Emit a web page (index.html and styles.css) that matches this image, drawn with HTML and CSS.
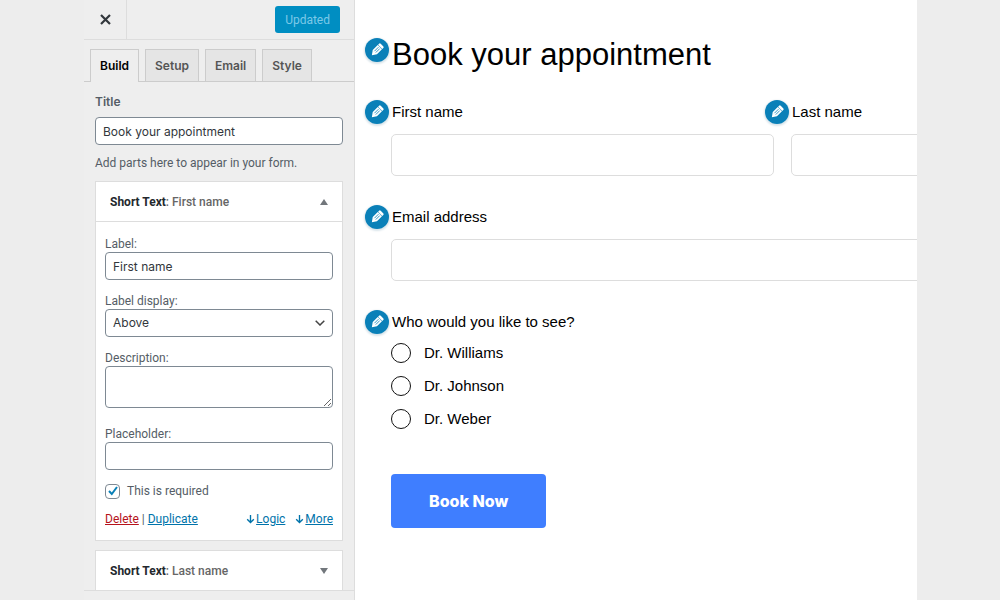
FILE: index.html
```html
<!DOCTYPE html>
<html lang="en">
<head>
<meta charset="utf-8">
<meta name="viewport" content="width=device-width, initial-scale=1">
<title>Book your appointment</title>
<link rel="stylesheet" href="styles.css">
</head>
<body>
<svg class="symbols">
  <symbol id="pencil" viewBox="0 0 16 16">
    <g transform="rotate(45 8 8)">
      <path fill="#fff" d="M4.600 2.800V1.300Q4.600 0 6 0h4q1.400 0 1.400 1.300v1.500zM4.600 3.400h6.800v8.100L8 16.300l-3.400-4.800z"/>
      <path fill="none" stroke="#0a80b8" stroke-width=".9" d="M6.900 4.600v6.400M9.100 4.600v6.400"/>
    </g>
  </symbol>
  <symbol id="down" viewBox="0 0 10 10">
    <path fill="none" stroke="currentColor" stroke-width="1.500" d="M5 .5v8.200M1.300 5.200 5 8.900l3.700-3.700"/>
  </symbol>
</svg>
<div class="app">
  <aside class="sidebar">
    <header class="topbar">
      <button class="close" type="button" aria-label="Close">
        <svg width="11" height="11" viewBox="0 0 11 11"><path stroke="#32373c" stroke-width="2.200" d="m1 1 9 9M10 1l-9 9"/></svg>
      </button>
      <button class="updated" type="button">Updated</button>
    </header>
    <nav class="tabs">
      <button class="tab tab-active" type="button">Build</button>
      <button class="tab" type="button">Setup</button>
      <button class="tab" type="button">Email</button>
      <button class="tab" type="button">Style</button>
    </nav>
    <div class="panel">
      <label class="title-label" for="title">Title</label>
      <input class="control" id="title" type="text" value="Book your appointment">
      <p class="hint">Add parts here to appear in your form.</p>
      <section class="card">
        <h2 class="card-head"><span><strong>Short Text</strong>: First name</span><span class="triangle up"></span></h2>
        <div class="card-body">
          <div class="setting"><label for="label">Label:</label><input class="control" id="label" type="text" value="First name"></div>
          <div class="setting"><label for="display">Label display:</label>
            <div class="select-wrap">
              <select class="control" id="display"><option>Above</option></select>
              <svg class="chevron" width="10" height="6" viewBox="0 0 10 6"><path fill="none" stroke="#444" stroke-width="1.500" d="m.7.7 4.300 4.300L9.300.7"/></svg>
            </div>
          </div>
          <div class="setting"><label for="description">Description:</label><textarea class="control" id="description"></textarea></div>
          <div class="setting"><label for="placeholder">Placeholder:</label><input class="control" id="placeholder" type="text"></div>
          <div class="check-row"><span class="check-wrap"><input class="check" id="required" type="checkbox" checked><svg class="tick" width="10" height="10" viewBox="0 0 10 10"><path fill="none" stroke="#0a80b8" stroke-width="2" d="m1 5 2.800 3L9 1"/></svg></span><label for="required">This is required</label></div>
          <div class="actions">
            <span><a class="delete" href="#">Delete</a> | <a href="#">Duplicate</a></span>
            <span class="more"><a href="#"><svg width="9" height="10"><use href="#down"/></svg>Logic</a><a href="#"><svg width="9" height="10"><use href="#down"/></svg>More</a></span>
          </div>
        </div>
      </section>
      <section class="card">
        <h2 class="card-head"><span><strong>Short Text</strong>: Last name</span><span class="triangle down"></span></h2>
      </section>
    </div>
    <footer class="footbar"></footer>
  </aside>
  <main class="preview">
    <form class="form">
      <div class="heading">
        <button class="edit" type="button" aria-label="Edit heading"><svg width="14" height="14"><use href="#pencil"/></svg></button>
        <h1>Book your appointment</h1>
      </div>
      <div class="pair">
        <div class="field">
          <div class="field-label"><button class="edit" type="button" aria-label="Edit first name"><svg width="14" height="14"><use href="#pencil"/></svg></button><label for="first">First name</label></div>
          <input class="box" id="first" type="text">
        </div>
        <div class="field">
          <div class="field-label"><button class="edit" type="button" aria-label="Edit last name"><svg width="14" height="14"><use href="#pencil"/></svg></button><label for="last">Last name</label></div>
          <input class="box" id="last" type="text">
        </div>
      </div>
      <div class="field">
        <div class="field-label"><button class="edit" type="button" aria-label="Edit email address"><svg width="14" height="14"><use href="#pencil"/></svg></button><label for="email">Email address</label></div>
        <input class="box" id="email" type="email">
      </div>
      <div class="field" role="radiogroup" aria-labelledby="who">
        <div class="field-label choices-label"><button class="edit" type="button" aria-label="Edit doctors"><svg width="14" height="14"><use href="#pencil"/></svg></button><span id="who">Who would you like to see?</span></div>
        <div class="choices">
          <label class="choice"><input type="radio" name="doctor">Dr. Williams</label>
          <label class="choice"><input type="radio" name="doctor">Dr. Johnson</label>
          <label class="choice"><input type="radio" name="doctor">Dr. Weber</label>
        </div>
      </div>
      <button class="submit" type="button">Book Now</button>
    </form>
  </main>
</div>
</body>
</html>
```
FILE: styles.css
```css
* { box-sizing: border-box; }
body {
  margin: 0;
  background: #ededed;
  color: #555d66;
  font: 12px/16px Roboto, "Liberation Sans", sans-serif;
}
button, input, select, textarea { font: inherit; margin: 0; }
.symbols { display: none; }
.app {
  display: flex;
  height: 100vh;
  padding: 0 83px 0 84px;
  overflow: hidden;
}

.sidebar {
  display: flex;
  flex-direction: column;
  flex: none;
  width: 271px;
  background: #eee;
  border-right: 1px solid #ddd;
}
.topbar {
  display: flex;
  flex: none;
  justify-content: space-between;
  align-items: center;
  height: 40px;
  padding-right: 14px;
  border-bottom: 1px solid #ddd;
}
.close {
  display: grid;
  place-items: center;
  align-self: stretch;
  width: 43px;
  padding: 0;
  background: none;
  border: 0;
  border-right: 1px solid #ddd;
}
.updated {
  height: 27px;
  padding: 0 10px;
  background: #008ec2;
  color: #7cc9e8;
  border: 0;
  border-radius: 3px;
}
.tabs {
  display: flex;
  flex: none;
  gap: 6px;
  padding: 9px 6px 0;
  border-bottom: 1px solid #ccc;
}
.tab {
  height: 32px;
  padding: 0 9px;
  background: #e5e5e5;
  color: #555;
  border: 1px solid #ccc;
  border-bottom: 0;
  font-family: Inter, sans-serif;
  font-weight: 600;
}
.tab-active {
  height: 33px;
  margin-bottom: -1px;
  background: #eee;
  color: #000;
}

.panel {
  flex: 1;
  min-height: 0;
  padding: 12px 11px 0;
  overflow: hidden;
}
.title-label {
  display: block;
  margin-bottom: 7px;
  font-family: Inter, sans-serif;
  font-weight: 600;
}
.control {
  display: block;
  width: 100%;
  height: 28px;
  padding: 0 7px;
  background: #fff;
  color: #32373c;
  border: 1px solid #7e8993;
  border-radius: 4px;
  font-family: Inter, sans-serif;
}
.hint { margin: 10px 0; }
.card {
  margin-bottom: 9px;
  background: #fff;
  border: 1px solid #ddd;
}
.card-head {
  display: flex;
  justify-content: space-between;
  align-items: center;
  height: 39px;
  margin: 0;
  padding: 0 14px;
  color: #666;
  font-size: 12px;
  font-weight: 500;
}
.card-head strong { color: #23282d; font-weight: 700; }
.triangle {
  border: 4px solid transparent;
  border-top: 0;
  border-bottom: 6px solid #72777c;
}
.triangle.down { border-bottom: 0; border-top: 6px solid #72777c; }
.card-body { padding: 14px 9px 13px; border-top: 1px solid #ddd; }
.setting { margin-bottom: 13px; }
.setting label { display: block; }
.select-wrap { display: grid; align-items: center; }
.select-wrap > * { grid-area: 1 / 1; }
select.control { appearance: none; }
.chevron { justify-self: end; margin-right: 8px; pointer-events: none; }
textarea.control { height: 42px; margin-bottom: 18px; }
.check-row { display: flex; align-items: center; gap: 7px; margin-bottom: 12px; }
.check-wrap { display: grid; place-items: center; }
.check-wrap > * { grid-area: 1 / 1; }
.check {
  appearance: none;
  width: 15px;
  height: 15px;
  background: #fff;
  border: 1px solid #7e8993;
  border-radius: 4px;
}
.tick { pointer-events: none; }
.actions { display: flex; justify-content: space-between; }
a { color: #0073aa; }
.delete { color: #b5121b; }
.more { display: flex; gap: 10px; }
.more svg { margin-right: 1px; vertical-align: -1px; }
.footbar { flex: none; height: 10px; border-top: 1px solid #ddd; }

.preview {
  flex: 1;
  min-width: 0;
  padding: 36px 0 0 36px;
  overflow: hidden;
  background: #fff;
  color: #000;
  font: 15px/24px "Liberation Sans", sans-serif;
}
.form {
  display: grid;
  gap: 29px;
  min-width: 783px;
}
.heading { display: flex; gap: 3px; margin-left: -26px; padding-top: 2px; }
.heading h1 { margin: 0; font-size: 31px; line-height: 33px; font-weight: 400; }
.pair { display: grid; grid-template-columns: 1fr 1fr; gap: 17px; }
.field-label {
  display: flex;
  gap: 3px;
  margin-left: -26px;
  margin-bottom: 10px;
}
.choices-label { margin-bottom: 9px; }
.edit {
  display: grid;
  place-items: center;
  flex: none;
  width: 24px;
  height: 24px;
  padding: 0;
  background: #0a80b8;
  border: 0;
  border-radius: 50%;
  box-shadow: 0 1px 2px 1px #d9e4ea;
}
.box {
  display: block;
  width: 100%;
  height: 42px;
  padding: 0 12px;
  background: #fff;
  border: 1px solid #ddd;
  border-radius: 5px;
}
.choices { display: grid; gap: 13px; }
.choice { display: flex; align-items: center; gap: 13px; line-height: 20px; }
.choice input {
  appearance: none;
  width: 20px;
  height: 20px;
  border: 1px solid #111;
  border-radius: 50%;
}
.submit {
  justify-self: start;
  height: 54px;
  margin-top: 16px;
  padding: 0 38px;
  background: #3f7eff;
  color: #fff;
  border: 0;
  border-radius: 4px;
  font-family: Inter, sans-serif;
  font-size: 16px;
  font-weight: 800;
}
```
